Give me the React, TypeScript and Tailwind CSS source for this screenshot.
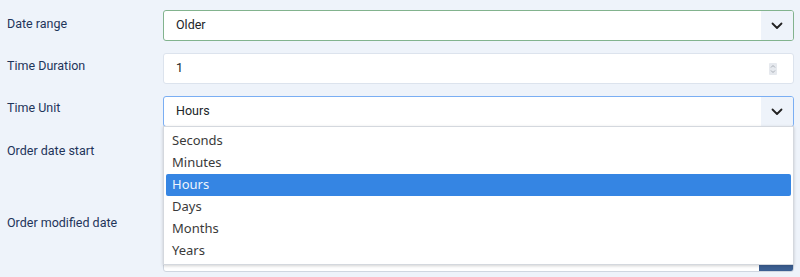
import React from "react";

function Chevron() {
  return (
    <svg width="12" height="8" viewBox="0 0 12 8" fill="none">
      <path d="M1.5 1.5 L6 6 L10.5 1.5" stroke="#222" strokeWidth="1.8" strokeLinecap="round" strokeLinejoin="round" />
    </svg>
  );
}

function Spinner() {
  return (
    <svg width="8" height="12" viewBox="0 0 8 12" fill="none">
      <rect x="0" y="0" width="8" height="12" rx="1" fill="#e6e9ee" />
      <path d="M2 4.5 L4 2.5 L6 4.5" stroke="#a0a6ae" strokeWidth="0.9" fill="none" />
      <path d="M2 7.5 L4 9.5 L6 7.5" stroke="#a0a6ae" strokeWidth="0.9" fill="none" />
    </svg>
  );
}

const items = ["Seconds", "Minutes", "Hours", "Days", "Months", "Years"];

export default function App() {
  return (
    <div
      className="w-[800px] h-[277px] overflow-hidden bg-[#eef3fa] pt-[10px] pr-[6px]"
      style={{ fontFamily: "Roboto, 'Liberation Sans', sans-serif" }}
    >
      <div className="flex flex-col gap-[13px]">
        {/* Date range */}
        <div className="flex">
          <div className="w-[163px] pl-[7px] pt-[6px] text-[12.5px] text-[#1f355a] leading-[16px]">Date range</div>
          <div className="flex-1 h-[31px] flex rounded-[3px] border border-[#82b38e] bg-white overflow-hidden">
            <div className="flex-1 flex items-center pl-[12px] text-[12.5px] text-[#212529]">Older</div>
            <div className="w-[32px] flex items-center justify-center bg-[#eef3fa]">
              <Chevron />
            </div>
          </div>
        </div>
        {/* Time Duration */}
        <div className="flex -mt-[1px]">
          <div className="w-[163px] pl-[7px] pt-[5px] text-[12.5px] text-[#1f355a] leading-[16px]">Time Duration</div>
          <div className="flex-1 h-[31px] flex items-center rounded-[3px] border border-[#dce3ed] bg-white">
            <div className="flex-1 pl-[12px] text-[12.5px] text-[#212529]">1</div>
            <div className="pr-[16px] flex items-center">
              <Spinner />
            </div>
          </div>
        </div>
        {/* Time Unit */}
        <div className="flex -mt-[1px]">
          <div className="w-[163px] pl-[7px] pt-[4px] text-[12.5px] text-[#1f355a] leading-[16px]">Time Unit</div>
          <div className="flex-1 relative">
            <div className="h-[31px] flex rounded-[3px] border border-[#7aaef3] bg-white overflow-hidden">
              <div className="flex-1 flex items-center pl-[12px] text-[12.5px] text-[#212529]">Hours</div>
              <div className="w-[32px] flex items-center justify-center bg-[#eef3fa]">
                <Chevron />
              </div>
            </div>
            <div
              className="absolute left-0 right-0 top-[30px] z-10 h-[139px] bg-white border border-[#d4d8de] pt-[3px] px-[2px] pb-[2px] shadow-[0_1px_3px_rgba(0,0,0,0.18)]"
              style={{ fontFamily: "'Noto Sans', 'Open Sans', sans-serif" }}
            >
              {items.map((it) => (
                <div
                  key={it}
                  className={
                    it === "Hours"
                      ? "h-[22px] flex items-center pl-[6px] text-[13px] rounded-[2px] bg-[#3585e3] text-[#eef4fd]"
                      : "h-[22px] flex items-center pl-[6px] text-[13px] text-[#3a3a3a]"
                  }
                >
                  {it}
                </div>
              ))}
            </div>
          </div>
        </div>
        {/* Order date start */}
        <div className="flex -mt-[1px]">
          <div className="w-[163px] pl-[7px] pt-[4px] text-[12.5px] text-[#1f355a] leading-[16px]">Order date start</div>
          <div className="flex-1 h-[60px] flex flex-col">
            <div className="h-[31px] rounded-[3px] border border-[#dce3ed] bg-white" />
          </div>
        </div>
        {/* Order modified date */}
        <div className="flex -mt-[1px]">
          <div className="w-[163px] pl-[7px] pt-[4px] text-[12.5px] text-[#1f355a] leading-[16px]">Order modified date</div>
          <div className="flex-1 flex flex-col">
            <div className="h-[30px]" />
            <div className="h-[31px] flex rounded-[3px] border border-[#cfd6e0] bg-white overflow-hidden">
              <div className="flex-1" />
              <div className="w-[34px] bg-[#3c5f92]" />
            </div>
          </div>
        </div>
      </div>
    </div>
  );
}
